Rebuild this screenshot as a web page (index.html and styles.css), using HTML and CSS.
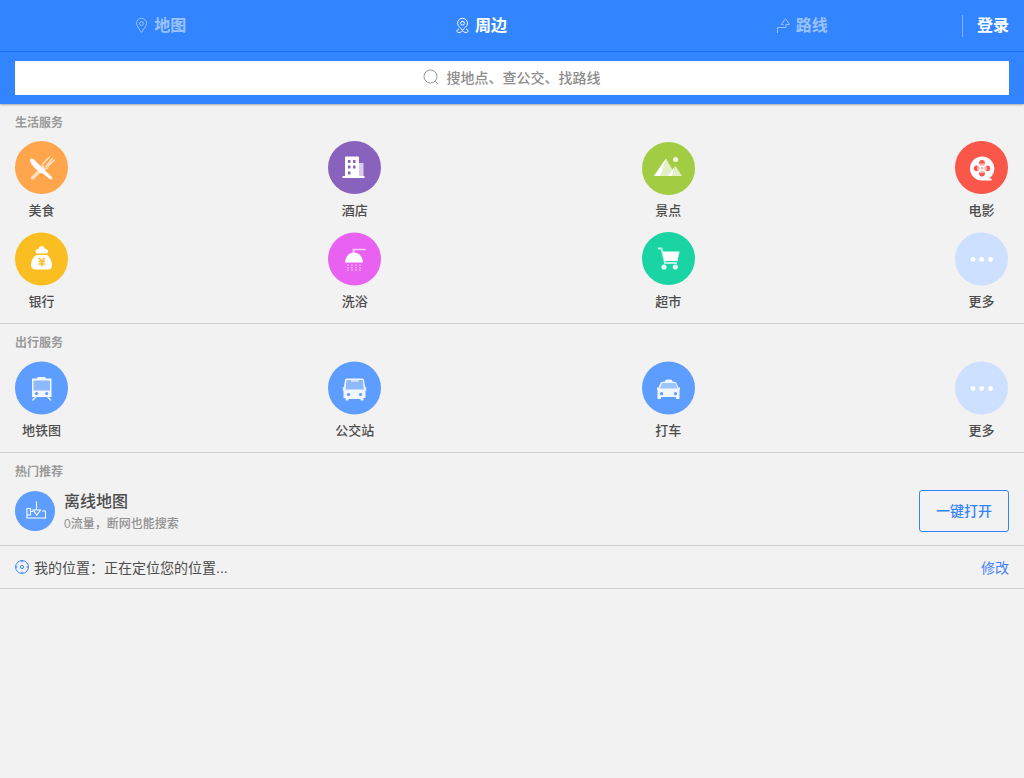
FILE: index.html
```
<!DOCTYPE html>
<html lang="zh-CN">
<head>
<meta charset="utf-8">
<meta name="viewport" content="width=device-width, initial-scale=1">
<title>周边</title>
<link rel="stylesheet" href="styles.css">
</head>
<body>
<header class="header">
  <div class="topbar">
    <nav class="tabs">
      <a class="tab" href="#map">
        <svg class="tab-icon" viewBox="0 0 16 16" aria-hidden="true"><path d="M7.500 14.500C6 11.500 2.500 8.500 2.500 5.300a5 5 0 0 1 10 0C12.500 8.500 9 11.500 7.500 14.500Z"/><circle cx="7.500" cy="5.500" r="1.900"/></svg>
        <span>地图</span>
      </a>
      <a class="tab tab-active" href="#nearby">
        <svg class="tab-icon" viewBox="0 0 16 16" aria-hidden="true"><path d="M7.500 12.500C6.500 10 2.500 8.700 2.500 5.300a5 5 0 0 1 10 0C12.500 8.700 8.500 10 7.500 12.500Z"/><circle cx="7.500" cy="5.200" r="1.900"/><path d="M4 11C1 12 1.500 14.500 3.800 14.500c1.800 0 2.500-.8 3.700-1.600 1.200.8 1.900 1.600 3.700 1.600 2.300 0 2.800-2.500-.2-3.500"/></svg>
        <span>周边</span>
      </a>
      <a class="tab" href="#route">
        <svg class="tab-icon" viewBox="0 0 16 16" aria-hidden="true"><path d="M1.500 15V9.500h8.500V6.500h3.600L9.500.8 5.300 6.500h2.200"/></svg>
        <span>路线</span>
      </a>
    </nav>
    <a class="login" href="#login">登录</a>
  </div>
  <div class="search">
    <button class="search-box" type="button">
      <svg class="search-icon" viewBox="0 0 16 16" aria-hidden="true"><circle cx="7.500" cy="7.500" r="6.500"/><path d="M12.200 12.200 15 15"/></svg>
      <span>搜地点、查公交、找路线</span>
    </button>
  </div>
</header>
<main>
  <section class="section">
    <h2 class="section-title">生活服务</h2>
    <div class="grid">
      <a class="item" href="#food">
        <svg class="item-icon" viewBox="0 0 53 53" aria-hidden="true"><circle cx="26.500" cy="25.500" r="26.500" fill="#ffa64d"/><g fill="none" stroke="#ffe0bf" stroke-linecap="round"><path d="M17.500 36 28 25.500" stroke-width="3.400"/><path d="M28 21.500 34.500 15M34 23 39.500 18M31 24.500 37.300 16.500M28 21.500q-2 4 1 5.500 3 1 5-4" stroke-width="1.500"/></g><path d="M15 17.500c.8-1.600 2.500-1 4 0L37 35.200c1 1.800-.8 3-2.300 1.800L27.200 31c-1.500.8-2.500-.3-3.200-1.200C19.500 26 14.500 21 15 17.500Z" fill="#fff"/></svg>
        <span>美食</span>
      </a>
      <a class="item" href="#hotel">
        <svg class="item-icon" viewBox="0 0 53 53" aria-hidden="true"><circle cx="26.500" cy="25.500" r="26.500" fill="#8962bd"/><path d="M31 21h4.500v14H31Z" fill="#dacce9"/><path d="M17 15.500q0-1 1-1h12q1 0 1 1V34h5.500v2h-22v-2H17Z" fill="#fff"/><path d="M20 18h2.500v3H20Zm5 0h2.500v3H25Zm-5 5.500h2.500v3H20Zm5 0h2.500v3H25ZM20 29.500h2.500v3H20Z" fill="#8962bd"/></svg>
        <span>酒店</span>
      </a>
      <a class="item" href="#sights">
        <svg class="item-icon" viewBox="0 0 53 53" aria-hidden="true"><circle cx="26.500" cy="26.500" r="26.500" fill="#a2cc42"/><path d="M12 34 24 16.500 34 34Z" fill="#e3efc6"/><path d="M12 34 24 16.500l-6 17.500ZM26 34l7-10-3 10Z" fill="#fff"/><path d="m30 34 3.500-10 6.500 10Z" fill="#e3efc6"/><circle cx="33.600" cy="17.500" r="2.500" fill="#f1f7e3"/></svg>
        <span>景点</span>
      </a>
      <a class="item" href="#movie">
        <svg class="item-icon" viewBox="0 0 53 53" aria-hidden="true"><circle cx="26.500" cy="25.500" r="26.500" fill="#f9574a"/><path d="M27 14.500a12 12 0 1 0 0 24h9.500v-2H34A12 12 0 0 0 27 14.500Z" fill="#fff"/><g fill="#f9574a"><circle cx="27" cy="21" r="2.900"/><circle cx="21.700" cy="26.300" r="2.900"/><circle cx="32.300" cy="26.300" r="2.900"/><circle cx="27" cy="31.600" r="2.900"/></g><circle cx="27" cy="26.300" r="5" fill="#fff" opacity=".55"/><circle cx="27" cy="26.300" r="1.300" fill="#fbb2aa"/></svg>
        <span>电影</span>
      </a>
      <a class="item" href="#bank">
        <svg class="item-icon" viewBox="0 0 53 53" aria-hidden="true"><circle cx="26.500" cy="26" r="26.500" fill="#fabe23"/><path d="M21.500 20.500c-1.500-2-1.500-4.500 2-4.500 1-4 5.500-4 6.500 0 3.500-.2 4 2.500 2 4.500Z" fill="#fff"/><path d="M21.500 22h10.500c3 2 5 6 5 10 0 3-1.500 4.500-4.500 4.500H21c-3 0-5-1.500-5-4.500 0-4 2-8 5.500-10Z" fill="#fff"/><path d="m24 25 2.800 3 2.800-3M23.500 28.500h6.600M23.500 31h6.600M26.800 28V33.500" fill="none" stroke="#fabe23" stroke-width="1.500"/></svg>
        <span>银行</span>
      </a>
      <a class="item" href="#bath">
        <svg class="item-icon" viewBox="0 0 53 53" aria-hidden="true"><circle cx="26.500" cy="26" r="26.500" fill="#e861f0"/><path d="M25.500 20.500v-4H37" fill="none" stroke="#fac9fc" stroke-width="1.700" stroke-linecap="round"/><path d="M17 29.500c.5-6 4-10 9-10s8.500 4 9 10Z" fill="#fff"/><path d="M20 31.500v7M24 31.500v7M28 31.500v7M32 31.500v7" fill="none" stroke="#f4a8f8" stroke-width="1.800" stroke-dasharray="1.500 1"/></svg>
        <span>洗浴</span>
      </a>
      <a class="item" href="#market">
        <svg class="item-icon" viewBox="0 0 53 53" aria-hidden="true"><circle cx="26.500" cy="25.500" r="26.500" fill="#1ad4a4"/><path d="M16 15.500h3.500L23 30h12" fill="none" stroke="#bdf3e5" stroke-width="1.800"/><path d="M20.500 18.500H37.500L35.500 28h-13Z" fill="#fff"/><circle cx="22" cy="34" r="2.600" fill="#e5faf5"/><circle cx="33.300" cy="34" r="2.600" fill="#e5faf5"/></svg>
        <span>超市</span>
      </a>
      <a class="item" href="#more-life">
        <svg class="item-icon" viewBox="0 0 53 53" aria-hidden="true"><circle cx="26.500" cy="26" r="26.500" fill="#cde0ff"/><g fill="#fff"><circle cx="18" cy="26.500" r="2.400"/><circle cx="26.700" cy="26.500" r="2.400"/><circle cx="35.500" cy="26.500" r="2.400"/></g></svg>
        <span>更多</span>
      </a>
    </div>
  </section>
  <section class="section">
    <h2 class="section-title">出行服务</h2>
    <div class="grid">
      <a class="item" href="#subway">
        <svg class="item-icon" viewBox="0 0 53 53" aria-hidden="true"><circle cx="26.500" cy="26" r="26.500" fill="#5c9dff"/><path d="M17 16.500h5q0-1.500 1.500-1.500h6q1.500 0 1.500 1.500h5.500V35H17Z" fill="#f1f6ff"/><path d="M18.500 18.500H35v10H18.500Z" fill="#8db9ff"/><circle cx="21.500" cy="31.500" r="1.600" fill="#5c9dff"/><circle cx="31.700" cy="31.500" r="1.600" fill="#5c9dff"/><path d="m21 34.500-3.500 4M32.500 34.500l3.500 4" stroke="#dce9ff" stroke-width="1.800"/></svg>
        <span>地铁图</span>
      </a>
      <a class="item" href="#bus">
        <svg class="item-icon" viewBox="0 0 53 53" aria-hidden="true"><circle cx="26.500" cy="26" r="26.500" fill="#5c9dff"/><path d="M17 18q0-1.500 1.500-1.500h16Q36 16.500 36 18l1.500 9v9h-2v2.500h-3V37H20.500v1.500h-3V36h-2v-9Z" fill="#f1f6ff"/><path d="M15.500 25v4M37.500 25v4" stroke="#dce9ff" stroke-width="1.500"/><path d="m18.500 18-1 9.500h18.300l-1-9.500Z" fill="#8db9ff"/><path d="M23 19h7.500" stroke="#d8e6ff" stroke-width="1.800"/><circle cx="20.500" cy="32.500" r="1.600" fill="#5c9dff"/><circle cx="32.500" cy="32.500" r="1.600" fill="#5c9dff"/></svg>
        <span>公交站</span>
      </a>
      <a class="item" href="#taxi">
        <svg class="item-icon" viewBox="0 0 53 53" aria-hidden="true"><circle cx="26.500" cy="26" r="26.500" fill="#5c9dff"/><path d="M23 19.500q0-2 2-2h3.500q2 0 2 2 3.500 0 4 1.500l2 4.500H38v2l-.5 1V37H34v-2H19v2h-3.500v-8.500l-.5-1v-2h1.500l2-4.500q.5-1.500 4.500-1.500Z" fill="#f1f6ff"/><path d="M20 21h13.500l2.200 5.500H17.800Z" fill="#9dc4ff"/><circle cx="19.500" cy="31.700" r="1.600" fill="#5c9dff"/><circle cx="33.500" cy="31.700" r="1.600" fill="#5c9dff"/></svg>
        <span>打车</span>
      </a>
      <a class="item" href="#more-travel">
        <svg class="item-icon" viewBox="0 0 53 53" aria-hidden="true"><circle cx="26.500" cy="26" r="26.500" fill="#cde0ff"/><g fill="#fff"><circle cx="18" cy="26.500" r="2.400"/><circle cx="26.700" cy="26.500" r="2.400"/><circle cx="35.500" cy="26.500" r="2.400"/></g></svg>
        <span>更多</span>
      </a>
    </div>
  </section>
  <section class="section">
    <h2 class="section-title">热门推荐</h2>
    <div class="promo">
      <svg class="promo-icon" viewBox="0 0 40 40" aria-hidden="true"><circle cx="20" cy="20" r="20" fill="#5c9dff"/><path d="M21.500 10.500V19M18 19h7.500l-3.700 5Zm0 1.500h-2.500v3.500H12v-6.500h3.500V24M12 24v3h18.500v-7H27" fill="none" stroke="#fff" stroke-width="1.100"/></svg>
      <div class="promo-text">
        <h3 class="promo-title">离线地图</h3>
        <p class="promo-note">0流量，断网也能搜索</p>
      </div>
      <button class="open-button" type="button">一键打开</button>
    </div>
  </section>
  <section class="location">
    <svg class="location-icon" viewBox="0 0 14 14" aria-hidden="true"><circle cx="7" cy="7" r="6.400"/><circle cx="7" cy="7" r="1.600"/><path d="M7 .5v2M7 11.500v2M.5 7h2M11.500 7h2"/></svg>
    <span class="location-text">我的位置：正在定位您的位置...</span>
    <a class="location-edit" href="#edit">修改</a>
  </section>
</main>
</body>
</html>
```
FILE: styles.css
```
* {
  box-sizing: border-box;
}

body {
  margin: 0;
  background: #f2f2f2;
  color: #4c4c4c;
  font-family: "Liberation Sans", "Noto Sans CJK SC Medium", "Noto Sans CJK SC", sans-serif;
  font-size: 14px;
}

a {
  color: inherit;
  text-decoration: none;
}

svg {
  flex: none;
  overflow: visible;
}

.topbar,
.section-title,
.location {
  font-family: "Liberation Sans", "Noto Sans CJK SC", sans-serif;
}

.header {
  background: #3385ff;
  color: #fff;
  box-shadow: 0 1px 2px rgba(0, 0, 0, 0.3);
}

.topbar {
  display: flex;
  align-items: center;
  height: 52px;
  border-bottom: 1px solid #1a6dff;
}

.tabs {
  display: flex;
  flex: 1;
}

.tab {
  display: flex;
  flex: 1;
  align-items: center;
  justify-content: center;
  gap: 4px;
  font-size: 16px;
  font-weight: 700;
  line-height: 24px;
  color: #99c2ff;
}

.tab-active {
  color: #fff;
}

.tab-icon {
  width: 16px;
  height: 16px;
  fill: none;
  stroke: currentColor;
  stroke-width: 1;
}

.login {
  padding: 0 15px 0 14px;
  border-left: 1px solid #84b5ff;
  font-size: 16px;
  font-weight: 700;
  line-height: 22px;
}

.search {
  padding: 9px 15px;
}

.search-box {
  display: flex;
  align-items: center;
  justify-content: center;
  gap: 8px;
  width: 100%;
  height: 34px;
  padding: 0 1px 2px 0;
  border: 0;
  background: #fff;
  color: #8c8c8c;
  font: inherit;
  font-weight: 500;
}

.search-icon {
  width: 16px;
  height: 16px;
  fill: none;
  stroke: #999;
}

.section {
  padding: 0 16px 0 15px;
  border-bottom: 1px solid #d0d0d0;
}

.section-title {
  margin: 0;
  font-size: 12px;
  font-weight: 700;
  line-height: 38px;
  color: #999;
}

.grid {
  display: grid;
  grid-template-columns: repeat(4, 53px);
  justify-content: space-between;
  row-gap: 1px;
}

.item {
  display: flex;
  flex-direction: column;
  align-items: center;
  gap: 5px;
  height: 90px;
  font-size: 13px;
  font-weight: 500;
  line-height: 22px;
  white-space: nowrap;
}

.item-icon {
  width: 53px;
  height: 53px;
}

.promo {
  display: flex;
  align-items: flex-start;
  gap: 9px;
  margin-right: -1px;
  padding-bottom: 10px;
}

.promo-icon {
  width: 40px;
  height: 40px;
}

.promo-text {
  flex: 1;
}

.promo-title {
  margin: 0;
  font-size: 16px;
  font-weight: 500;
  line-height: 22px;
}

.promo-note {
  margin: 0;
  font-size: 12px;
  font-weight: 500;
  line-height: 22px;
  color: #919191;
}

.open-button {
  width: 90px;
  height: 42px;
  margin-top: -1px;
  padding: 0 0 2px;
  border: 1px solid #3385ff;
  border-radius: 3px;
  background: transparent;
  color: #3385ff;
  font: inherit;
  font-weight: 500;
}

.location {
  display: flex;
  align-items: center;
  gap: 5px;
  height: 43px;
  padding: 0 15px 1px;
  border-bottom: 1px solid #d0d0d0;
}

.location-icon {
  width: 14px;
  height: 14px;
  fill: none;
  stroke: #3385ff;
}

.location-text {
  flex: 1;
}

.location-edit {
  color: #4480ff;
}
```
